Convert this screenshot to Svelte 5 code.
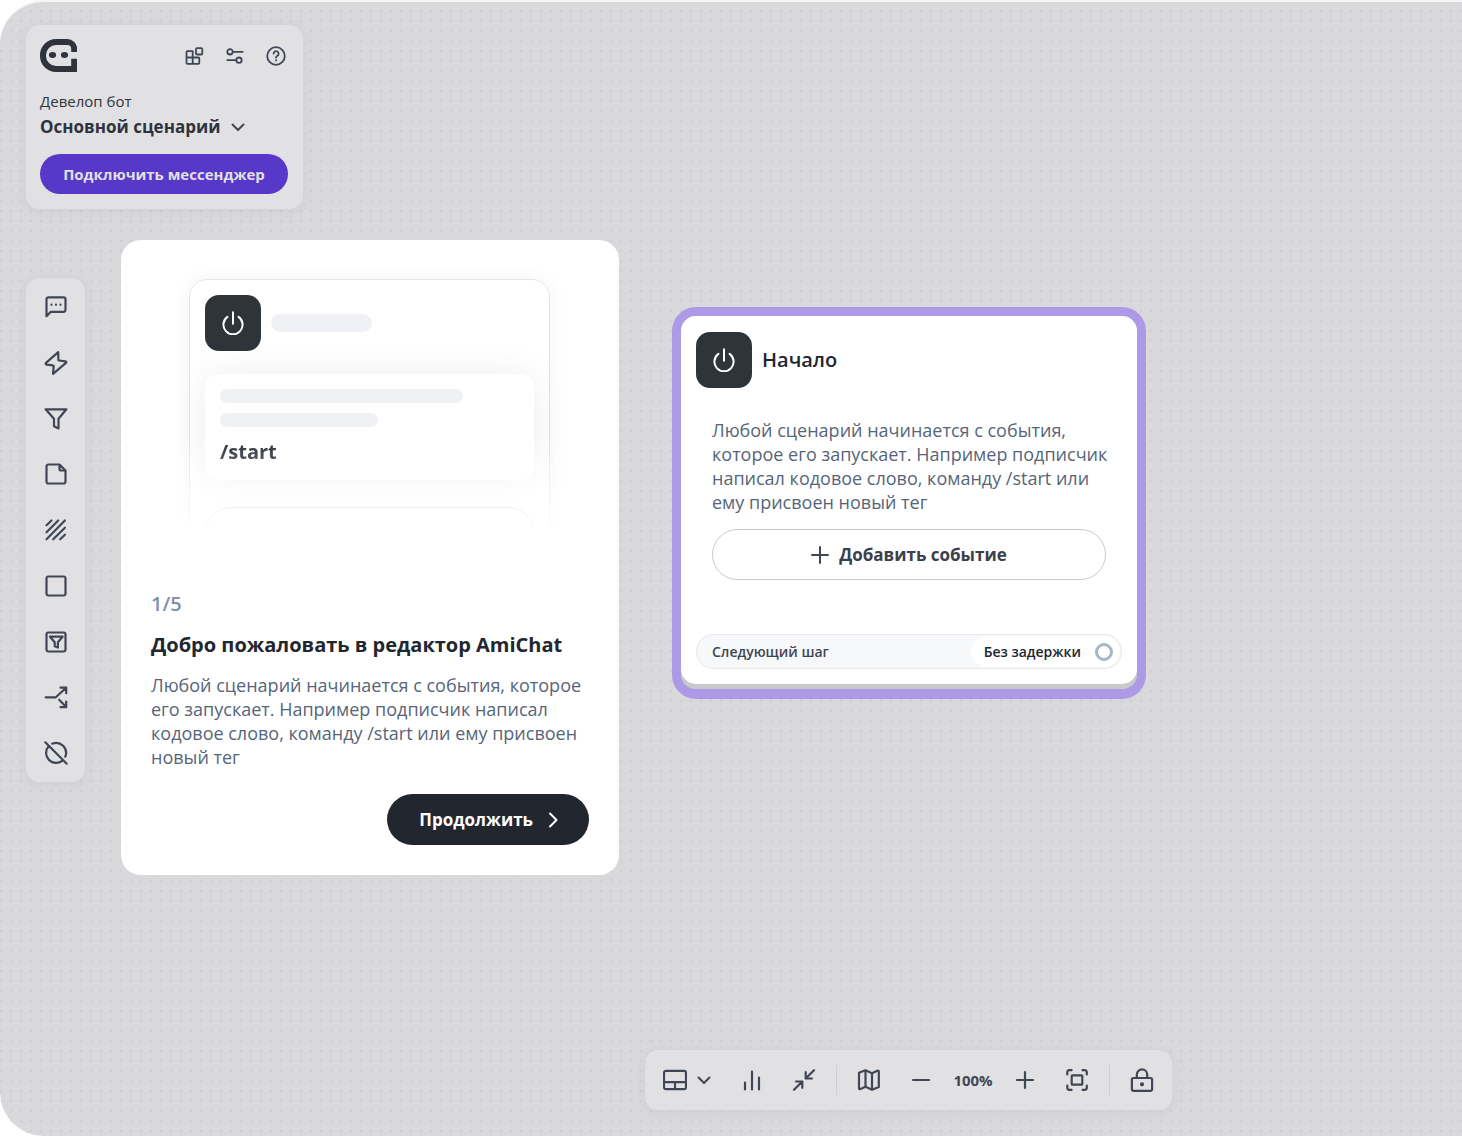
<script>
let zoom = $state(100)
let step = $state(1)

const totalSteps = 5
const hint = 'Любой сценарий начинается с события, которое его запускает. Например подписчик написал кодовое слово, команду /start или ему присвоен новый тег'

const tools = [
     { title: 'Сообщение', d: 'M2.5 21.3V4.3a2 2 0 0 1 2-2h15a2 2 0 0 1 2 2v10.5a2 2 0 0 1-2 2H6.8zM7.5 9.6v.2M12 9.6v.2M16.5 9.6v.2' },
     { title: 'Действие', d: 'M14.2 1.2 2 11.9q-1 1.3.6 1.7l6.3.7q.9.1.8 1l-.7 7.5L22 11.9q.9-1.2-.6-1.6l-6.1-.8q-1-.1-.9-1z' },
     { title: 'Фильтр', d: 'M1.6 2.3h20.8l-7.9 9.5v9.6L10 19.2v-7.4z' },
     { title: 'Заметка', d: 'M15.5 2.5h-11a2 2 0 0 0-2 2v15a2 2 0 0 0 2 2h15a2 2 0 0 0 2-2v-11zM15.5 2.5v4.5a1.5 1.5 0 0 0 1.5 1.5h4.5' },
     { title: 'Область', d: 'M2.5 7.2 7.5 2.5M2.5 14.3 14.2 2.5M2.5 21.3 20.9 2.5M9.2 21.3l11.7-11.6M16.2 21.3l4.7-4.6' },
     { title: 'Блок', d: 'M4.2 2.5h15.6a1.7 1.7 0 0 1 1.7 1.7v15.6a1.7 1.7 0 0 1-1.7 1.7H4.2a1.7 1.7 0 0 1-1.7-1.7V4.2a1.7 1.7 0 0 1 1.7-1.7z' },
     { title: 'Условие', d: 'M4.2 2.5h15.6a1.7 1.7 0 0 1 1.7 1.7v15.6a1.7 1.7 0 0 1-1.7 1.7H4.2a1.7 1.7 0 0 1-1.7-1.7V4.2a1.7 1.7 0 0 1 1.7-1.7zM6 6.7h12.6l-4.7 5.6v5.3l-3.2-1.4v-3.9z' },
     { title: 'Ветвление', d: 'M1.6 12.3h10.2L22.2 2.7M16.5 2.7h5.7v5.6M15.2 14.7l7 7.4M16.5 22.1h5.7v-5.6' },
     { title: 'Отключить', d: 'M8.2 2.7a10 10 0 0 1 13.1 13M4.6 5.3a10 10 0 0 0 13.9 14.3M1.3 1.3l21.4 21.4' }
]

function zoomBy(n){
     zoom = Math.min(200, Math.max(10, zoom + n))
}

function nextStep(){
     if(step < totalSteps){
          step++
     }
}
</script>

{#snippet icon(d)}
<svg class="icon" viewBox="0 0 24 24" aria-hidden="true"><path {d} /></svg>
{/snippet}

{#snippet power()}
<div class="power">
     <svg class="icon" viewBox="0 0 24 24" aria-hidden="true"><path d="M12 1.2v11.6M6.4 5.9a9.6 9.6 0 1 0 11.2 0" /></svg>
</div>
{/snippet}

<div class="canvas">
     <header class="panel head">
          <div class="headTop">
               <svg class="logo" viewBox="0 0 37 33" aria-label="AmiChat" role="img">
                    <path d="M34.2 13v-3a7 7 0 0 0-7-7H16A13 13 0 0 0 3 16v1a13 13 0 0 0 13 13h18.2V19.7" />
                    <ellipse cx="12.5" cy="16" rx="3.6" ry="3" />
                    <ellipse cx="24.5" cy="16" rx="3.6" ry="3" />
               </svg>
               <div class="headIcons">
                    <button type="button" title="Модули">{@render icon('M5.5 7.2h5.2v12.6H5.5a1 1 0 0 1-1-1V8.2a1 1 0 0 1 1-1zM4.5 13.5h11.8a1 1 0 0 1 1 1v4.3a1 1 0 0 1-1 1h-5.6M15 4.2h4.3a1 1 0 0 1 1 1v4.3a1 1 0 0 1-1 1H15a1 1 0 0 1-1-1V5.2a1 1 0 0 1 1-1z')}</button>
                    <button type="button" title="Настройки">{@render icon('M4.3 7.8a2.7 2.7 0 1 0 5.4 0a2.7 2.7 0 1 0-5.4 0M9.7 7.8h10M4.3 16.2h9M13.3 16.2a2.7 2.7 0 1 0 5.4 0a2.7 2.7 0 1 0-5.4 0')}</button>
                    <button type="button" title="Помощь">{@render icon('M3.2 12a8.8 8.8 0 1 0 17.6 0a8.8 8.8 0 1 0-17.6 0M9.6 9.6a2.5 2.5 0 1 1 3.8 2.2q-1.4.8-1.4 1.9M12 16.2v.2')}</button>
               </div>
          </div>
          <div class="botName">Девелоп бот</div>
          <button class="scenario" type="button">Основной сценарий
               <svg class="chevron" viewBox="0 0 16 16" aria-hidden="true"><path d="M2.5 5.5 8 11l5.5-5.5" /></svg>
          </button>
          <button class="connect" type="button">Подключить мессенджер</button>
     </header>

     <main>
          <nav class="panel tools" aria-label="Блоки">
               {#each tools as tool}
               <button type="button" title={tool.title}>{@render icon(tool.d)}</button>
               {/each}
          </nav>

          <section class="tour">
               <div class="preview" aria-hidden="true">
                    <div class="previewCard">
                         <div class="cardHead">
                              {@render power()}
                              <div class="bar barTitle"></div>
                         </div>
                         <div class="command">
                              <div class="bar barLong"></div>
                              <div class="bar barShort"></div>
                              <div class="commandText">/start</div>
                         </div>
                         <div class="previewButton"></div>
                    </div>
               </div>
               <div class="step">{step}/{totalSteps}</div>
               <h2>Добро пожаловать в редактор AmiChat</h2>
               <p class="hint">{hint}</p>
               <button class="next" type="button" onclick={() => nextStep()}>Продолжить
                    <svg class="chevron" viewBox="0 0 16 16" aria-hidden="true"><path d="M5 1.5 11.5 8 5 14.5" /></svg>
               </button>
          </section>

          <section class="ring">
               <div class="node">
                    <div class="cardHead">
                         {@render power()}
                         <h3>Начало</h3>
                    </div>
                    <div class="nodeBody">
                         <p class="hint">{hint}</p>
                         <button class="addEvent" type="button">
                              <svg class="plus" viewBox="0 0 18 18" aria-hidden="true"><path d="M9 1v16M1 9h16" /></svg>
                              Добавить событие
                         </button>
                    </div>
                    <div class="nextRow">
                         <span>Следующий шаг</span>
                         <button class="delay" type="button">Без задержки <i class="port"></i></button>
                    </div>
               </div>
          </section>
     </main>

     <footer class="panel toolbar">
          <div class="group">
               <button class="layout" type="button" title="Вид">
                    {@render icon('M3 2.8h18a2 2 0 0 1 2 2v14.4a2 2 0 0 1-2 2H3a2 2 0 0 1-2-2V4.8a2 2 0 0 1 2-2zM1 14.2h22M12 14.2v7')}
                    <svg class="chevron" viewBox="0 0 16 16" aria-hidden="true"><path d="M2.5 5.5 8 11l5.5-5.5" /></svg>
               </button>
               <button type="button" title="Статистика">{@render icon('M5 14.5v7M12 3.5v18M19 9.5v12')}</button>
               <button type="button" title="Свернуть">{@render icon('M22 2.2l-8.3 8.3M13.7 4.2v6.3H20M2 21.8l8.3-8.3M4 13.5h6.3v6.3')}</button>
          </div>
          <div class="group">
               <button type="button" title="Карта">{@render icon('M2 4.8 8.5 2.3 15 5.2l5.3-2.5a1 1 0 0 1 1.5.9V19L15 21.8l-6.5-3-5 2.3A1 1 0 0 1 2 20.2zM8.5 2.3v16.5M15 5.2v16.6')}</button>
               <div class="zoomGroup">
                    <button type="button" title="Уменьшить" onclick={() => zoomBy(-10)}>{@render icon('M4 12h16')}</button>
                    <span class="zoom">{zoom}%</span>
                    <button type="button" title="Увеличить" onclick={() => zoomBy(10)}>{@render icon('M4 12h16M12 4v16')}</button>
               </div>
               <button type="button" title="По размеру">{@render icon('M2.3 6.5V4.2a2 2 0 0 1 2-2h2.3M17.5 2.2h2.3a2 2 0 0 1 2 2v2.3M21.8 17.5v2.3a2 2 0 0 1-2 2h-2.3M6.6 21.8H4.3a2 2 0 0 1-2-2v-2.3M7.5 7.3h9a.8.8 0 0 1 .8.8v7.8a.8.8 0 0 1-.8.8h-9a.8.8 0 0 1-.8-.8V8.1a.8.8 0 0 1 .8-.8z')}</button>
          </div>
          <div class="group">
               <button type="button" title="Заблокировать">{@render icon('M3.6 10h16.8a1.7 1.7 0 0 1 1.7 1.7v9.4a1.7 1.7 0 0 1-1.7 1.7H3.6a1.7 1.7 0 0 1-1.7-1.7v-9.4A1.7 1.7 0 0 1 3.6 10zM6.8 10V6.6a5.2 5.2 0 0 1 10.4 0V10M11 16.3a1 1 0 1 0 2 0a1 1 0 1 0-2 0')}</button>
          </div>
     </footer>
</div>

<style>
     :global(body){
          background-color: #ffffff;
          font-family: "Open Sans", "Noto Sans", sans-serif;
          color: #2f333d;
     }

     .canvas{
          box-sizing: border-box;
          min-height: 100vh;
          padding: 22px 25px 25px;
          border-top: 2px solid #f4f4f5;
          border-radius: 44px 0px 0px 44px;
          background-color: #d9d9dc;
          background-image: radial-gradient(circle, #cfd0d3 1px, transparent 2px);
          background-size: 10px 10px;
          background-position: 6px 4px;
          display: flex;
          flex-direction: column;
          align-items: flex-start;
     }

     button{
          display: flex;
          align-items: center;
          margin: 0px;
          padding: 0px;
          border: none;
          background: none;
          color: inherit;
          font-family: inherit;
          cursor: pointer;
     }

     h2, h3, p{
          margin: 0px;
     }

     svg{
          display: block;
          fill: none;
          stroke: #414654;
          stroke-width: 2;
          stroke-linecap: round;
          stroke-linejoin: round;
     }

     .icon{
          width: 24px;
          height: 24px;
     }

     .chevron{
          width: 16px;
          height: 16px;
     }

     .panel{
          box-sizing: border-box;
          background-color: #e1e1e3;
          border: 1px solid #d3d3d8;
          border-radius: 14px;
          box-shadow: 0px 2px 10px rgba(60, 60, 90, 0.05);
     }

     .tools .icon, .toolbar .icon{
          stroke-width: 2.2;
     }

     .head{
          width: 279px;
          padding: 14px 15px 15px 14px;
     }

     .headTop{
          display: flex;
          justify-content: space-between;
          align-items: center;
     }

     .logo{
          width: 37px;
          height: 33px;
          stroke: #2f333d;
          stroke-width: 6;
          stroke-linecap: butt;
          stroke-linejoin: miter;
     }

     .logo ellipse{
          fill: #2f333d;
          stroke: none;
     }

     .headIcons{
          display: flex;
          gap: 17px;
     }

     .headIcons .icon{
          stroke-width: 1.8;
     }

     .botName{
          margin-top: 19px;
          font-size: 15px;
          line-height: 20px;
     }

     .scenario{
          gap: 10px;
          margin-top: 4px;
          font-size: 17px;
          line-height: 24px;
          font-weight: 700;
     }

     .connect{
          width: 100%;
          height: 40px;
          margin-top: 15px;
          justify-content: center;
          border-radius: 20px;
          background-color: #5838c8;
          color: #e1e1e3;
          font-size: 15px;
          font-weight: 700;
     }

     main{
          display: flex;
          align-items: flex-start;
          margin-top: 30px;
     }

     .tools{
          display: flex;
          flex-direction: column;
          align-items: center;
          justify-content: space-between;
          flex: none;
          width: 61px;
          min-height: 506px;
          margin-top: 37px;
          padding: 17px 0px;
     }

     .tour{
          box-sizing: border-box;
          width: 498px;
          margin-left: 35px;
          padding: 30px;
          border-radius: 20px;
          background-color: #ffffff;
     }

     .preview{
          height: 248px;
          padding: 9px 39px 0px 38px;
          margin-bottom: 65px;
          overflow: hidden;
          mask-image: linear-gradient(#000 65%, transparent 105%);
     }

     .previewCard{
          padding: 15px;
          border: 1px solid #e3e5ea;
          border-radius: 18px;
          box-shadow: 0px 0px 20px rgba(30, 35, 45, 0.05);
     }

     .cardHead{
          display: flex;
          align-items: center;
          gap: 10px;
     }

     .power{
          display: flex;
          align-items: center;
          justify-content: center;
          width: 56px;
          height: 56px;
          border-radius: 14px;
          background-color: #2f343b;
     }

     .power .icon{
          stroke: #ffffff;
     }

     .bar{
          height: 14px;
          border-radius: 9px;
          background-color: #f0f1f5;
     }

     .barTitle{
          width: 101px;
          height: 18px;
     }

     .barLong{
          width: 243px;
     }

     .barShort{
          width: 158px;
          margin-top: 10px;
     }

     .command{
          margin-top: 23px;
          padding: 15px;
          border-radius: 14px;
          background-color: #ffffff;
          box-shadow: 0px 0px 36px rgba(30, 35, 45, 0.07);
     }

     .commandText{
          margin-top: 12px;
          font-size: 20px;
          line-height: 26px;
          font-weight: 700;
          color: #22262f;
     }

     .previewButton{
          height: 51px;
          margin-top: 27px;
          border: 1px solid #ced3da;
          border-radius: 26px;
          background-color: #ffffff;
     }

     .step{
          font-size: 20px;
          line-height: 24px;
          font-weight: 600;
          color: #8390a5;
     }

     h2{
          margin-top: 17px;
          font-size: 20px;
          line-height: 24px;
          font-weight: 700;
          color: #22262f;
          white-space: nowrap;
     }

     .hint{
          font-size: 18px;
          line-height: 24px;
          color: #56657a;
     }

     .tour .hint{
          margin-top: 16px;
     }

     .node .hint{
          margin-right: -8px;
     }

     .next{
          gap: 12px;
          height: 51px;
          margin: 25px 0px 0px auto;
          padding: 0px 28px 0px 32px;
          border-radius: 26px;
          background-color: #22262f;
          color: #ffffff;
          font-size: 17px;
          font-weight: 700;
     }

     .next .chevron{
          stroke: #ffffff;
     }

     .ring{
          box-sizing: border-box;
          width: 474px;
          margin: 67px 0px 0px 53px;
          padding-bottom: 5px;
          border: 9px solid #ac9ae6;
          border-bottom-width: 10px;
          border-radius: 24px;
          background-color: #c9c9cc;
     }

     .node{
          padding: 16px 15px 15px;
          border-radius: 15px;
          background-color: #ffffff;
     }

     h3{
          font-size: 20px;
          line-height: 24px;
          font-weight: 600;
          color: #22262f;
     }

     .nodeBody{
          padding: 30px 16px 54px;
     }

     .addEvent{
          width: 100%;
          height: 51px;
          margin-top: 15px;
          justify-content: center;
          gap: 10px;
          border: 1px solid #c6cbd4;
          border-radius: 26px;
          color: #3a404c;
          font-size: 17px;
          font-weight: 700;
     }

     .plus{
          width: 18px;
          height: 18px;
     }

     .nextRow{
          display: flex;
          justify-content: space-between;
          align-items: center;
          padding: 1px 1px 1px 15px;
          border: 1px solid #e6e8ec;
          border-radius: 18px;
          background-color: #f7f8fa;
          font-size: 14px;
          font-weight: 600;
          color: #3f4653;
     }

     .delay{
          gap: 14px;
          height: 31px;
          padding: 0px 7px 0px 13px;
          border-radius: 16px;
          background-color: #ffffff;
          color: #22262f;
          font-size: 14px;
          font-weight: 600;
     }

     .port{
          width: 12px;
          height: 12px;
          border: 3px solid #a9b4c4;
          border-radius: 50%;
     }

     .toolbar{
          display: flex;
          align-items: center;
          height: 62px;
          margin: auto 0px 0px 619px;
     }

     .group{
          display: flex;
          align-items: center;
          gap: 28px;
          height: 30px;
          padding: 0px 20px;
     }

     .group:first-child{
          padding-left: 18px;
     }

     .group:last-child{
          padding-right: 18px;
     }

     .group + .group{
          border-left: 1px solid #cfd0d4;
     }

     .layout{
          gap: 9px;
     }

     .zoomGroup{
          display: flex;
          align-items: center;
          gap: 18px;
     }

     .zoom{
          min-width: 44px;
          text-align: center;
          font-size: 15px;
          line-height: 20px;
          font-weight: 700;
          color: #414654;
     }
</style>
